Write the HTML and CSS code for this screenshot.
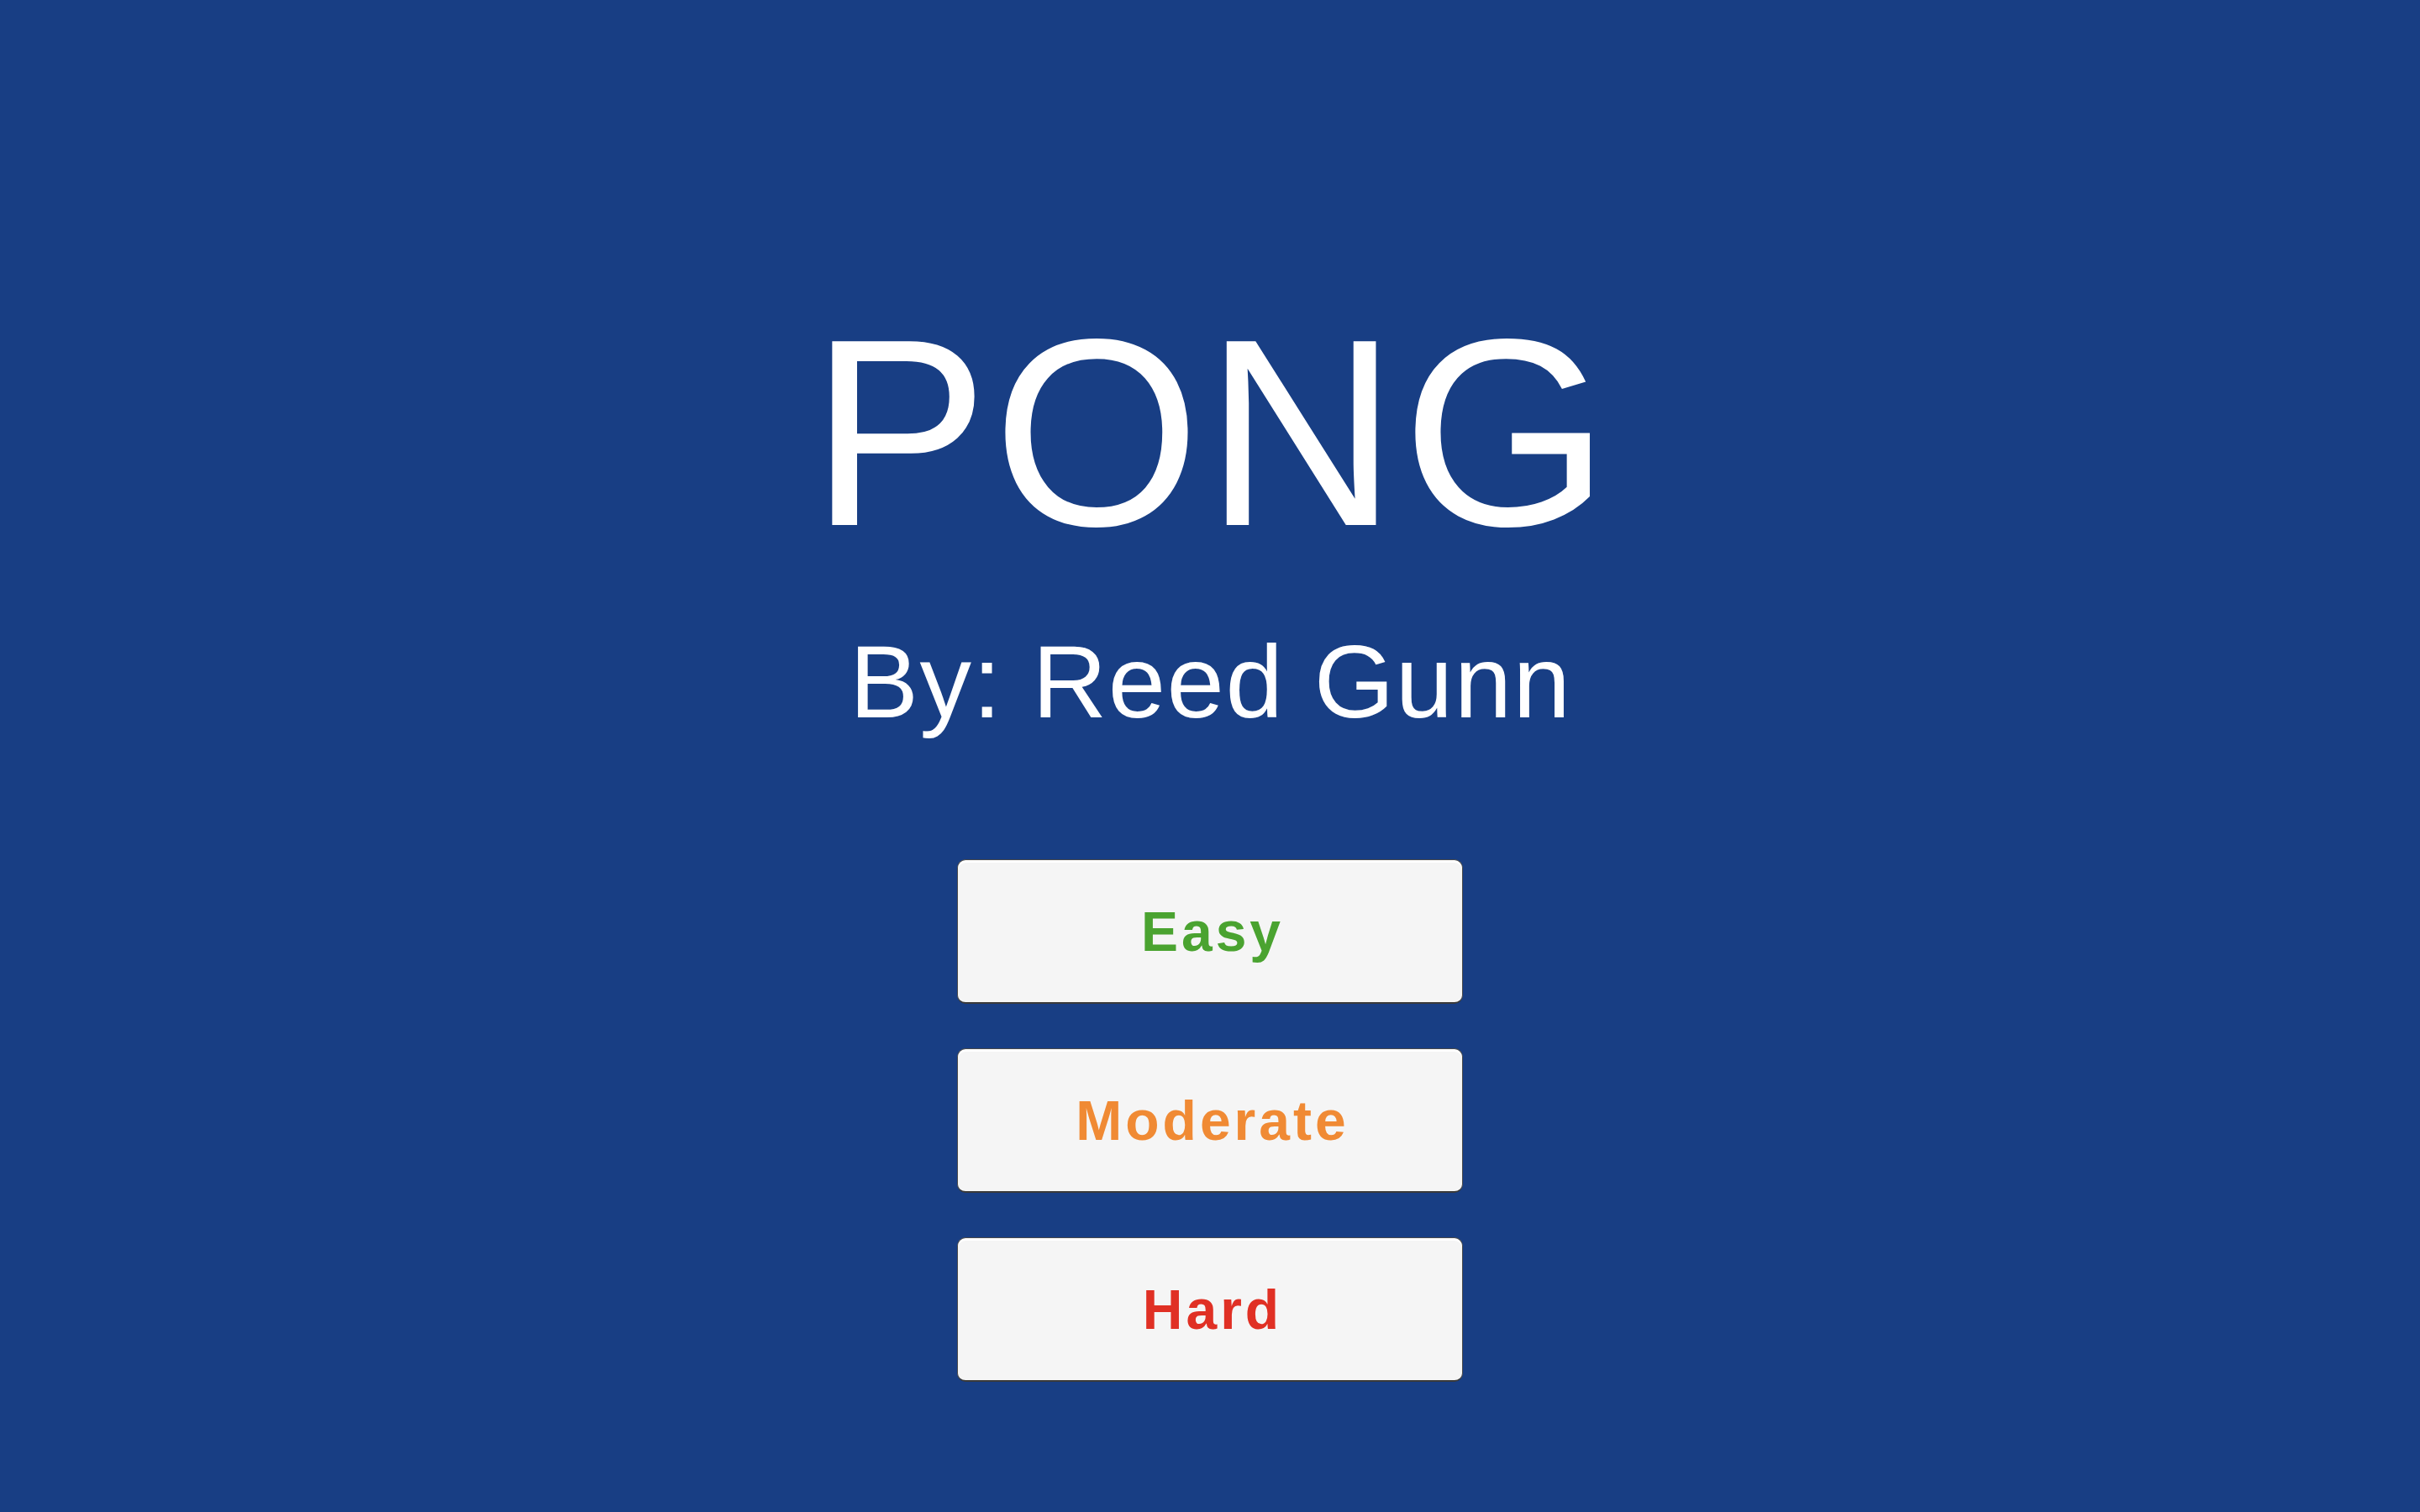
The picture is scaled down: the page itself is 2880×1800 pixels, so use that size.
FILE: index.html
```html
<!DOCTYPE html>
<html lang="en">
<head>
<meta charset="utf-8">
<title>PONG</title>
<link rel="stylesheet" href="styles.css">
</head>
<body>
<main class="menu">
  <h1 class="title">PONG</h1>
  <p class="byline">By: Reed Gunn</p>
  <div class="buttons">
    <button class="btn btn-easy">Easy</button>
    <button class="btn btn-moderate">Moderate</button>
    <button class="btn btn-hard">Hard</button>
  </div>
</main>
</body>
</html>
```

FILE: styles.css
```css
html, body {
  margin: 0;
  padding: 0;
}

body {
  background: #183e84;
  width: 100%;
  height: 100vh;
  overflow: hidden;
  font-family: "Liberation Sans", Arial, sans-serif;
}

.menu {
  display: flex;
  flex-direction: column;
  align-items: center;
  padding-top: 356px;
}

.title {
  margin: 0;
  font-size: 318px;
  line-height: 1;
  font-weight: 400;
  letter-spacing: 5px;
  padding-left: 5px;
  color: #ffffff;
}

.byline {
  margin: 76px 0 0 0;
  font-size: 123px;
  line-height: 1;
  letter-spacing: 1.4px;
  padding-left: 1.4px;
  color: #ffffff;
}

.buttons {
  display: flex;
  flex-direction: column;
  gap: 53px;
  margin-top: 150px;
}

.btn {
  box-sizing: border-box;
  width: 602px;
  height: 172px;
  display: flex;
  align-items: center;
  justify-content: center;
  background: #f5f5f5;
  border: 1px solid #4a4a4a;
  border-bottom: 2px solid #3a3a3a;
  border-radius: 10px;
  box-shadow: inset 0 3px 0 #ffffff;
  font-family: "Liberation Sans", Arial, sans-serif;
  font-weight: 700;
  font-size: 66px;
  line-height: 1;
  letter-spacing: 4px;
  padding: 0 0 0 6px;
  cursor: pointer;
}

.btn-easy {
  color: #4aa330;
}

.btn-moderate {
  color: #f08a34;
}

.btn-hard {
  color: #e03024;
}
```
